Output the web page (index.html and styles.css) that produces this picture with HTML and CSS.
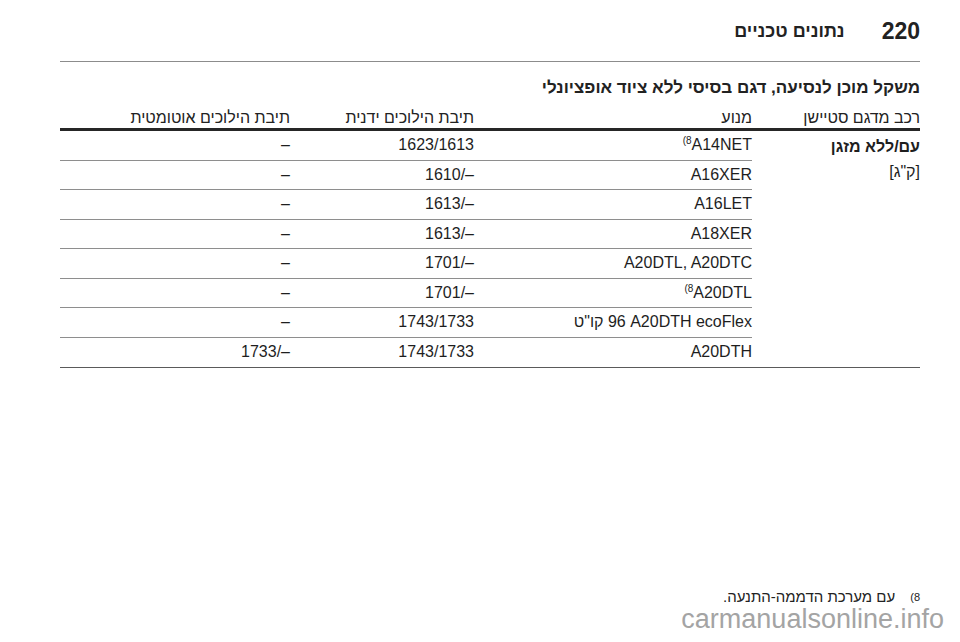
FILE: index.html
```html
<!DOCTYPE html>
<html lang="he" dir="rtl">
<head>
<meta charset="utf-8">
<title>נתונים טכניים</title>
<link rel="stylesheet" href="styles.css">
</head>
<body>
<div class="page">
  <header class="top">
    <span class="pnum">220</span>
    <span class="ptitle">נתונים טכניים</span>
  </header>
  <h2 class="title">משקל מוכן לנסיעה, דגם בסיסי ללא ציוד אופציונלי</h2>
  <div class="table">
    <div class="th">רכב מדגם סטיישן</div>
    <div class="th">מנוע</div>
    <div class="th">תיבת הילוכים ידנית</div>
    <div class="th">תיבת הילוכים אוטומטית</div>

    <div class="model"><b>עם/ללא מזגן</b><span>[ק"ג]</span></div>

    <div class="td"><span dir="ltr"><sup>(8</sup>A14NET</span></div>
    <div class="td"><span dir="ltr">1623/1613</span></div>
    <div class="td"><span dir="ltr">–</span></div>

    <div class="td"><span dir="ltr">A16XER</span></div>
    <div class="td"><span dir="ltr">1610/–</span></div>
    <div class="td"><span dir="ltr">–</span></div>

    <div class="td"><span dir="ltr">A16LET</span></div>
    <div class="td"><span dir="ltr">1613/–</span></div>
    <div class="td"><span dir="ltr">–</span></div>

    <div class="td"><span dir="ltr">A18XER</span></div>
    <div class="td"><span dir="ltr">1613/–</span></div>
    <div class="td"><span dir="ltr">–</span></div>

    <div class="td"><span dir="ltr">A20DTL, A20DTC</span></div>
    <div class="td"><span dir="ltr">1701/–</span></div>
    <div class="td"><span dir="ltr">–</span></div>

    <div class="td"><span dir="ltr"><sup>(8</sup>A20DTL</span></div>
    <div class="td"><span dir="ltr">1701/–</span></div>
    <div class="td"><span dir="ltr">–</span></div>

    <div class="td"><span dir="ltr"><span dir="rtl">קו"ט</span> 96 A20DTH ecoFlex</span></div>
    <div class="td"><span dir="ltr">1743/1733</span></div>
    <div class="td"><span dir="ltr">–</span></div>

    <div class="td last"><span dir="ltr">A20DTH</span></div>
    <div class="td last"><span dir="ltr">1743/1733</span></div>
    <div class="td last"><span dir="ltr">1733/–</span></div>
  </div>
  <p class="note"><sup dir="ltr">(8</sup><span>עם מערכת הדממה-התנעה.</span></p>
  <div class="watermark" dir="ltr">carmanualsonline.info</div>
</div>
</body>
</html>
```

FILE: styles.css
```css
html, body {
  margin: 0;
  padding: 0;
  background: #ffffff;
}

body {
  font-family: "Liberation Sans", Arial, "DejaVu Sans", sans-serif;
  color: #1e1e1e;
  direction: rtl;
}

.page {
  position: relative;
  width: 960px;
  height: 642px;
  box-sizing: border-box;
  padding: 0 40px 0 60px;
  overflow: hidden;
}

.top {
  height: 62px;
  border-bottom: 1px solid #8c8c8c;
  display: flex;
  align-items: center;
  gap: 37px;
  padding-top: 1px;
  box-sizing: border-box;
}

.pnum {
  font-size: 23px;
  font-weight: bold;
  color: #222;
}

.ptitle {
  font-size: 18px;
  font-weight: bold;
  color: #222;
}

.title {
  margin: 16px 0 0;
  font-size: 17px;
  line-height: 20px;
  font-weight: bold;
  color: #222;
}

.table {
  display: grid;
  grid-template-columns: 168px 278px 184px 230px;
  grid-template-rows: 33px repeat(8, 29.5px);
  border-bottom: 1px solid #5a5a5a;
}

.th {
  box-sizing: border-box;
  border-bottom: 3px solid #262626;
  display: flex;
  align-items: flex-end;
  padding-bottom: 1px;
  font-size: 16px;
  line-height: 18px;
  color: #222;
}

.model {
  grid-column: 1;
  grid-row: 2 / span 8;
  display: flex;
  flex-direction: column;
  align-items: flex-start;
  padding-top: 3px;
  font-size: 16px;
  line-height: 25px;
}

.model b {
  font-weight: bold;
}

.model span {
  font-size: 16px;
}

.td {
  box-sizing: border-box;
  border-bottom: 1px solid #8e8e8e;
  display: flex;
  align-items: center;
  font-size: 16px;
  color: #1e1e1e;
}

.td.last {
  border-bottom: none;
}

.td sup,
.note sup {
  font-size: 10px;
  line-height: 0;
  vertical-align: 6px;
}

.note {
  margin: 221px 0 0;
  display: flex;
  align-items: center;
  gap: 15px;
  font-size: 15px;
  line-height: 16px;
  color: #222;
}

.note sup {
  font-size: 11px;
  vertical-align: 5px;
}

.watermark {
  position: absolute;
  top: 609px;
  right: 16px;
  font-size: 27px;
  line-height: 21px;
  color: #a4a4a4;
  font-family: "Liberation Sans", Arial, sans-serif;
}
```
